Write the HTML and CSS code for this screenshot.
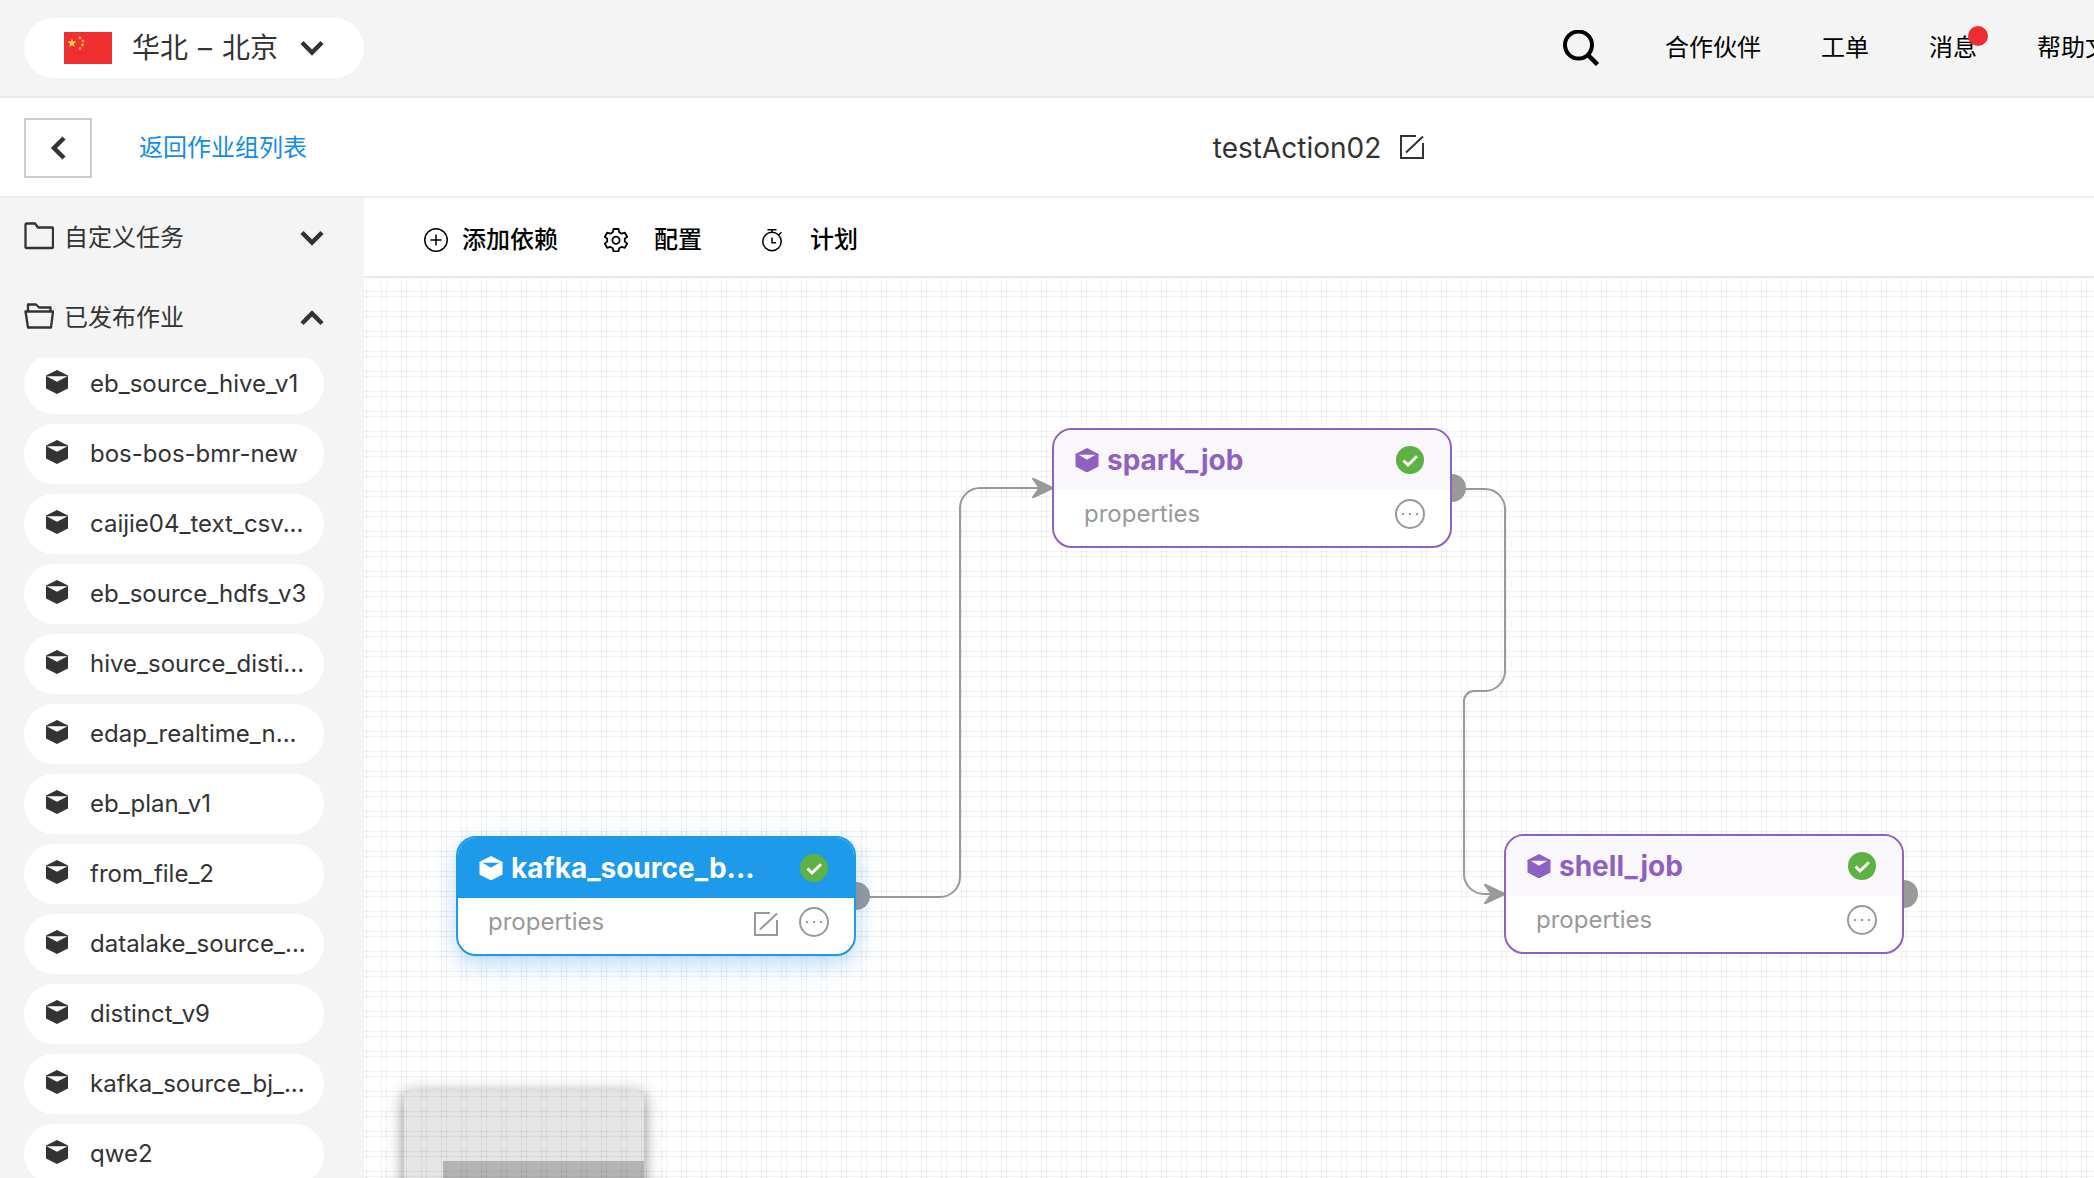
FILE: index.html
```html
<!DOCTYPE html>
<html lang="zh-CN">
<head>
<meta charset="utf-8">
<title>testAction02</title>
<link rel="stylesheet" href="styles.css">
</head>
<body>
<svg class="defs" aria-hidden="true">
  <symbol id="cube" viewBox="0 0 24 24"><path fill-rule="evenodd" d="M12 0 24 6.200V6.800H23.500V18.400L12 24.500.500 18.400V6.800H0V6.200ZM3.600 6.800 12 11.700 20.400 6.800Z"/></symbol>
  <symbol id="block" viewBox="0 0 24 24"><path fill-rule="evenodd" d="M12 0 23 5.500V18.500L12 24 1 18.500V5.500ZM1.500 6.200 12 11.800 22.500 6.200Z"/></symbol>
  <symbol id="down" viewBox="0 0 24 16"><path d="M2 2.500 12 12.500 22 2.500" fill="none" stroke="currentColor" stroke-width="4.500"/></symbol>
  <symbol id="check" viewBox="0 0 28 28"><circle cx="14" cy="14" r="14" fill="#5db243"/><path d="m7.500 14.500 4.500 4.500 9-8.800" fill="none" stroke="#fff" stroke-width="3"/></symbol>
  <symbol id="more" viewBox="0 0 30 30"><circle cx="15" cy="15" r="14" fill="none" stroke="currentColor" stroke-width="2"/><path d="M7 14h2v2H7zM14 14h2v2h-2zM21 14h2v2h-2z" fill="currentColor"/></symbol>
  <symbol id="edit" viewBox="0 0 26 26"><path d="M17 2H2V24H24V9M7 18.500 24 2.500" fill="none" stroke="currentColor" stroke-width="2"/></symbol>
</svg>

<header class="topbar">
  <button class="region" type="button">
    <svg class="flag" viewBox="0 0 48 32"><path fill="#f02f32" d="M0 0h48v32H0z"/><path fill="#ffde4d" d="m8 6.500 1.100 3.100h3.400L9.800 11.700l1 3.300L8 13l-2.800 2 1-3.300L3.500 9.600h3.400z"/><g fill="#fcb436"><circle cx="16" cy="6" r="1.400"/><circle cx="19" cy="9" r="1.300"/><circle cx="18.500" cy="13" r="1.400"/><circle cx="16" cy="16.500" r="1.400"/></g></svg>
    <span class="region-name"><span>华北</span> <span>–</span> <span>北京</span></span>
    <svg class="chevron"><use href="#down"/></svg>
  </button>
  <nav class="topnav">
    <button class="search" type="button" aria-label="搜索"><svg viewBox="0 0 36 36"><circle cx="15.500" cy="15" r="13.500" fill="none" stroke="#000" stroke-width="4"/><path d="m25 25 9.500 9.500" stroke="#000" stroke-width="4.500"/></svg></button>
    <a href="#">合作伙伴</a>
    <a href="#">工单</a>
    <a class="messages" href="#">消息</a>
    <a href="#">帮助文档</a>
  </nav>
</header>

<div class="titlebar">
  <div class="back">
    <button class="back-button" type="button" aria-label="返回"><svg viewBox="0 0 16 24"><path d="M14 2 4 12 14 22" fill="none" stroke="currentColor" stroke-width="4.500"/></svg></button>
    <a class="back-link" href="#">返回作业组列表</a>
  </div>
  <div class="job">
    <h1>testAction02</h1>
    <button class="rename" type="button" aria-label="重命名"><svg><use href="#edit"/></svg></button>
  </div>
</div>

<div class="workspace">
  <aside class="sidebar">
    <button class="group" type="button">
      <svg class="folder" viewBox="0 0 30 28"><path d="M1.500 2.500Q1.500 1.500 2.500 1.500H11L14 5.500H28Q29 5.500 29 6.500V25Q29 26 28 26H2.500Q1.500 26 1.500 25Z" fill="none" stroke="currentColor" stroke-width="2.300"/></svg>
      <span>自定义任务</span>
      <svg class="chevron"><use href="#down"/></svg>
    </button>
    <button class="group" type="button" aria-expanded="true">
      <svg class="folder" viewBox="0 0 30 28"><path d="M4 9V2.500H12L15 5.500H26.500V9M1.500 9.500H29L27 25.500H4Z" fill="none" stroke="currentColor" stroke-width="2.300" stroke-linejoin="round"/></svg>
      <span>已发布作业</span>
      <svg class="chevron up"><use href="#down"/></svg>
    </button>
    <div class="jobs">
      <ul>
        <li><svg><use href="#block"/></svg>eb_source_hive_v1</li>
        <li><svg><use href="#block"/></svg>bos-bos-bmr-new</li>
        <li><svg><use href="#block"/></svg>caijie04_text_csv...</li>
        <li><svg><use href="#block"/></svg>eb_source_hdfs_v3</li>
        <li><svg><use href="#block"/></svg>hive_source_disti...</li>
        <li><svg><use href="#block"/></svg>edap_realtime_n...</li>
        <li><svg><use href="#block"/></svg>eb_plan_v1</li>
        <li><svg><use href="#block"/></svg>from_file_2</li>
        <li><svg><use href="#block"/></svg>datalake_source_...</li>
        <li><svg><use href="#block"/></svg>distinct_v9</li>
        <li><svg><use href="#block"/></svg>kafka_source_bj_...</li>
        <li><svg><use href="#block"/></svg>qwe2</li>
      </ul>
    </div>
  </aside>

  <main class="editor">
    <div class="toolbar">
      <button class="tool" type="button"><svg viewBox="0 0 24 24"><path d="M12 6.500v11M6.500 12h11"/><circle cx="12" cy="12" r="11.200"/></svg>添加依赖</button>
      <button class="tool config" type="button"><svg viewBox="0 0 24 24"><path stroke-width="1.800" stroke-linejoin="round" d="M9.500 1h5l.7 3.200 2.600 1.500 3-1 2.400 4.100-2.400 2v2.800l2.400 2-2.400 4.200-3-1-2.600 1.500-.7 3.200h-5l-.7-3.200-2.600-1.500-3 1L.800 15.600l2.400-2v-2.800l-2.400-2 2.400-4.100 3 1 2.600-1.500z"/><circle cx="12" cy="12.200" r="3.600" stroke-width="1.800"/></svg>配置</button>
      <button class="tool schedule" type="button"><svg viewBox="0 0 24 24"><circle cx="12" cy="13.500" r="9.200"/><path d="M7.500 1.700h9M12 1.700v3M18.500 7l3-2.700M12 9.500v5.300h4"/></svg>计划</button>
    </div>
    <div class="canvas">
      <svg class="graph">
        <defs>
          <pattern id="grid" width="20" height="20" patternUnits="userSpaceOnUse">
            <path d="M2.500 0V20M17.500 0V20M0 13.500H20M0 18.500H20" stroke="#f6f6f6"/>
            <path d="M2.500 11V20M17.500 11V20M2.500 0V1M17.500 0V1M0 13.500H5M15 13.500H20M0 18.500H5M15 18.500H20" stroke="#ededed"/>
          </pattern>
        </defs>
        <rect width="100%" height="100%" fill="url(#grid)"/>
        <g fill="none" stroke="#999" stroke-width="2">
          <path d="M492 619H576a20 20 0 0 0 20-20V230a20 20 0 0 1 20-20H680"/>
          <path d="M1088 211H1121a20 20 0 0 1 20 20V393a20 20 0 0 1-20 20H1110a10 10 0 0 0-10 10V596a20 20 0 0 0 20 20H1132"/>
        </g>
        <g fill="#999" stroke="#999" stroke-linejoin="round">
          <path d="M690 210 669 220 668.500 219 675 210 668.500 201 669 200Z"/>
          <path d="M1142 616 1121 626 1120.500 625 1127 616 1120.500 607 1121 606Z"/>
        </g>
        <g fill="#999">
          <circle cx="492" cy="618" r="14"/><circle cx="1088" cy="210" r="14"/><circle cx="1540" cy="616" r="14"/>
        </g>
      </svg>
      <section class="node spark">
        <div class="node-head"><svg class="cube"><use href="#cube"/></svg><h2>spark_job</h2><svg class="status"><use href="#check"/></svg></div>
        <div class="node-body"><span>properties</span><button type="button" aria-label="更多"><svg class="more"><use href="#more"/></svg></button></div>
      </section>
      <section class="node kafka selected">
        <div class="node-head"><svg class="cube"><use href="#cube"/></svg><h2>kafka_source_b...</h2><svg class="status"><use href="#check"/></svg></div>
        <div class="node-body"><span>properties</span><button type="button" aria-label="编辑"><svg class="edit"><use href="#edit"/></svg></button><button type="button" aria-label="更多"><svg class="more"><use href="#more"/></svg></button></div>
      </section>
      <section class="node shell">
        <div class="node-head"><svg class="cube"><use href="#cube"/></svg><h2>shell_job</h2><svg class="status"><use href="#check"/></svg></div>
        <div class="node-body"><span>properties</span><button type="button" aria-label="更多"><svg class="more"><use href="#more"/></svg></button></div>
      </section>
      <div class="minimap"><div class="viewport"></div></div>
    </div>
  </main>
</div>
</body>
</html>
```
FILE: styles.css
```css
* { box-sizing: border-box; }

body {
  margin: 0;
  height: 100vh;
  display: flex;
  flex-direction: column;
  overflow: hidden;
  background: #fff;
  color: #333;
  font: 24px/36px Inter, "Noto Sans CJK SC", sans-serif;
}

button {
  padding: 0;
  border: 0;
  background: none;
  color: inherit;
  font: inherit;
  cursor: pointer;
}

a { color: inherit; text-decoration: none; }
svg { display: block; flex: none; }
h1, h2, ul { margin: 0; padding: 0; font-weight: 400; }
.defs { position: absolute; width: 0; height: 0; }
.chevron { width: 24px; height: 16px; }
.chevron.up { transform: rotate(180deg); }

.topbar {
  display: flex;
  flex: none;
  align-items: center;
  justify-content: space-between;
  height: 98px;
  padding-left: 24px;
  background: #f4f4f4;
  border-bottom: 2px solid #e6eaee;
}

.region {
  display: flex;
  align-items: center;
  width: 340px;
  height: 60px;
  padding: 0 40px;
  border-radius: 30px;
  background: #fff;
  font-size: 28px;
}

.region-name { display: flex; gap: 10px; }
.flag { width: 48px; height: 32px; margin-right: 20px; }
.region .chevron { margin-left: auto; }

/* the last entry runs past the window's right edge */
.topnav {
  display: flex;
  align-items: center;
  gap: 60px;
  margin-right: -39px;
  color: #000;
}

.search svg { width: 36px; height: 36px; }
.search { margin-right: 6px; }
.messages { position: relative; }
.messages::after {
  content: "";
  position: absolute;
  top: -4px;
  right: -11px;
  width: 20px;
  height: 20px;
  border-radius: 50%;
  background: #ee2d30;
}

.titlebar {
  display: flex;
  flex: none;
  align-items: center;
  height: 100px;
  padding: 2px 0 0 24px;
  border-bottom: 2px solid #ebedf8;
}

.back {
  display: flex;
  align-items: center;
  gap: 47px;
  width: 520px;
}

.back-button {
  display: flex;
  align-items: center;
  justify-content: center;
  width: 68px;
  height: 60px;
  border: 2px solid #ccc;
}

.back-button svg { width: 16px; height: 24px; }
.back-link { color: #108cee; }

.job {
  display: flex;
  flex: 1;
  align-items: center;
  justify-content: center;
  gap: 18px;
}

.job h1 { font-size: 28px; }
.rename svg { width: 26px; height: 26px; margin-bottom: 2px; }

.workspace { display: flex; flex: 1; min-height: 0; }

.sidebar {
  display: flex;
  flex: none;
  flex-direction: column;
  width: 364px;
  background: #f4f4f4;
}

.group {
  display: flex;
  flex: none;
  align-items: center;
  gap: 10px;
  height: 80px;
  padding: 0 40px 0 24px;
}

.group .chevron { margin-left: auto; }
.folder { width: 30px; height: 28px; margin-bottom: 4px; }

.jobs { flex: 1; min-height: 0; overflow: hidden; }

.jobs ul {
  display: flex;
  flex-direction: column;
  gap: 10px;
  margin-top: -4px;
  padding: 0 40px 0 24px;
  list-style: none;
}

.jobs li {
  display: flex;
  align-items: center;
  gap: 21px;
  height: 60px;
  padding-left: 21px;
  border-radius: 30px;
  background: #fff;
  white-space: nowrap;
}

.jobs svg { width: 24px; height: 24px; margin-bottom: 4px; fill: #333; }

.editor { display: flex; flex: 1; flex-direction: column; min-width: 0; }

.toolbar {
  display: flex;
  flex: none;
  align-items: center;
  gap: 46px;
  height: 80px;
  padding: 6px 60px 0;
  border-bottom: 2px solid #e9e9e9;
  color: #000;
  font-weight: 500;
}

.tool { display: flex; align-items: center; gap: 14px; }
.tool svg { width: 24px; height: 24px; fill: none; stroke: #000; stroke-width: 1.5px; }
.config, .schedule { gap: 26px; }
.schedule { padding-left: 12px; }

.canvas { position: relative; flex: 1; overflow: hidden; }
.graph { position: absolute; inset: 0; width: 100%; height: 100%; }

.node {
  position: absolute;
  width: 400px;
  border: 2px solid #8e60c2;
  border-radius: 20px;
  background: #fff;
  overflow: hidden;
}

.spark { left: 688px; top: 150px; }
.kafka { left: 92px; top: 558px; }
.shell { left: 1140px; top: 556px; }

.node-head {
  display: flex;
  align-items: center;
  height: 60px;
  padding: 0 26px 0 21px;
  background: #f9f7fc;
  color: #8e60c2;
}

.node h2 { margin-left: 8px; font-size: 28px; font-weight: 700; }
.cube { width: 24px; height: 24px; fill: currentColor; }
.status { width: 28px; height: 28px; margin-left: auto; }

.node-body {
  display: flex;
  align-items: center;
  gap: 20px;
  height: 56px;
  padding: 0 25px 8px 30px;
  color: #999;
}

.node-body span { margin-right: auto; }
.edit { width: 26px; height: 26px; margin-top: 4px; }
.more { width: 30px; height: 30px; }

.selected { border-color: #1e9aeb; box-shadow: 0 8px 24px rgba(30, 130, 235, .3); }
.selected .node-head { background: #1e9aeb; color: #fff; }

.minimap {
  position: absolute;
  left: 40px;
  top: 812px;
  width: 240px;
  height: 160px;
  padding: 71px 0 0 39px;
  background: rgba(0, 0, 0, .1);
  box-shadow: 0 4px 16px rgba(0, 0, 0, .45);
}

.viewport { height: 100%; background: rgba(0, 0, 0, .21); }
```
